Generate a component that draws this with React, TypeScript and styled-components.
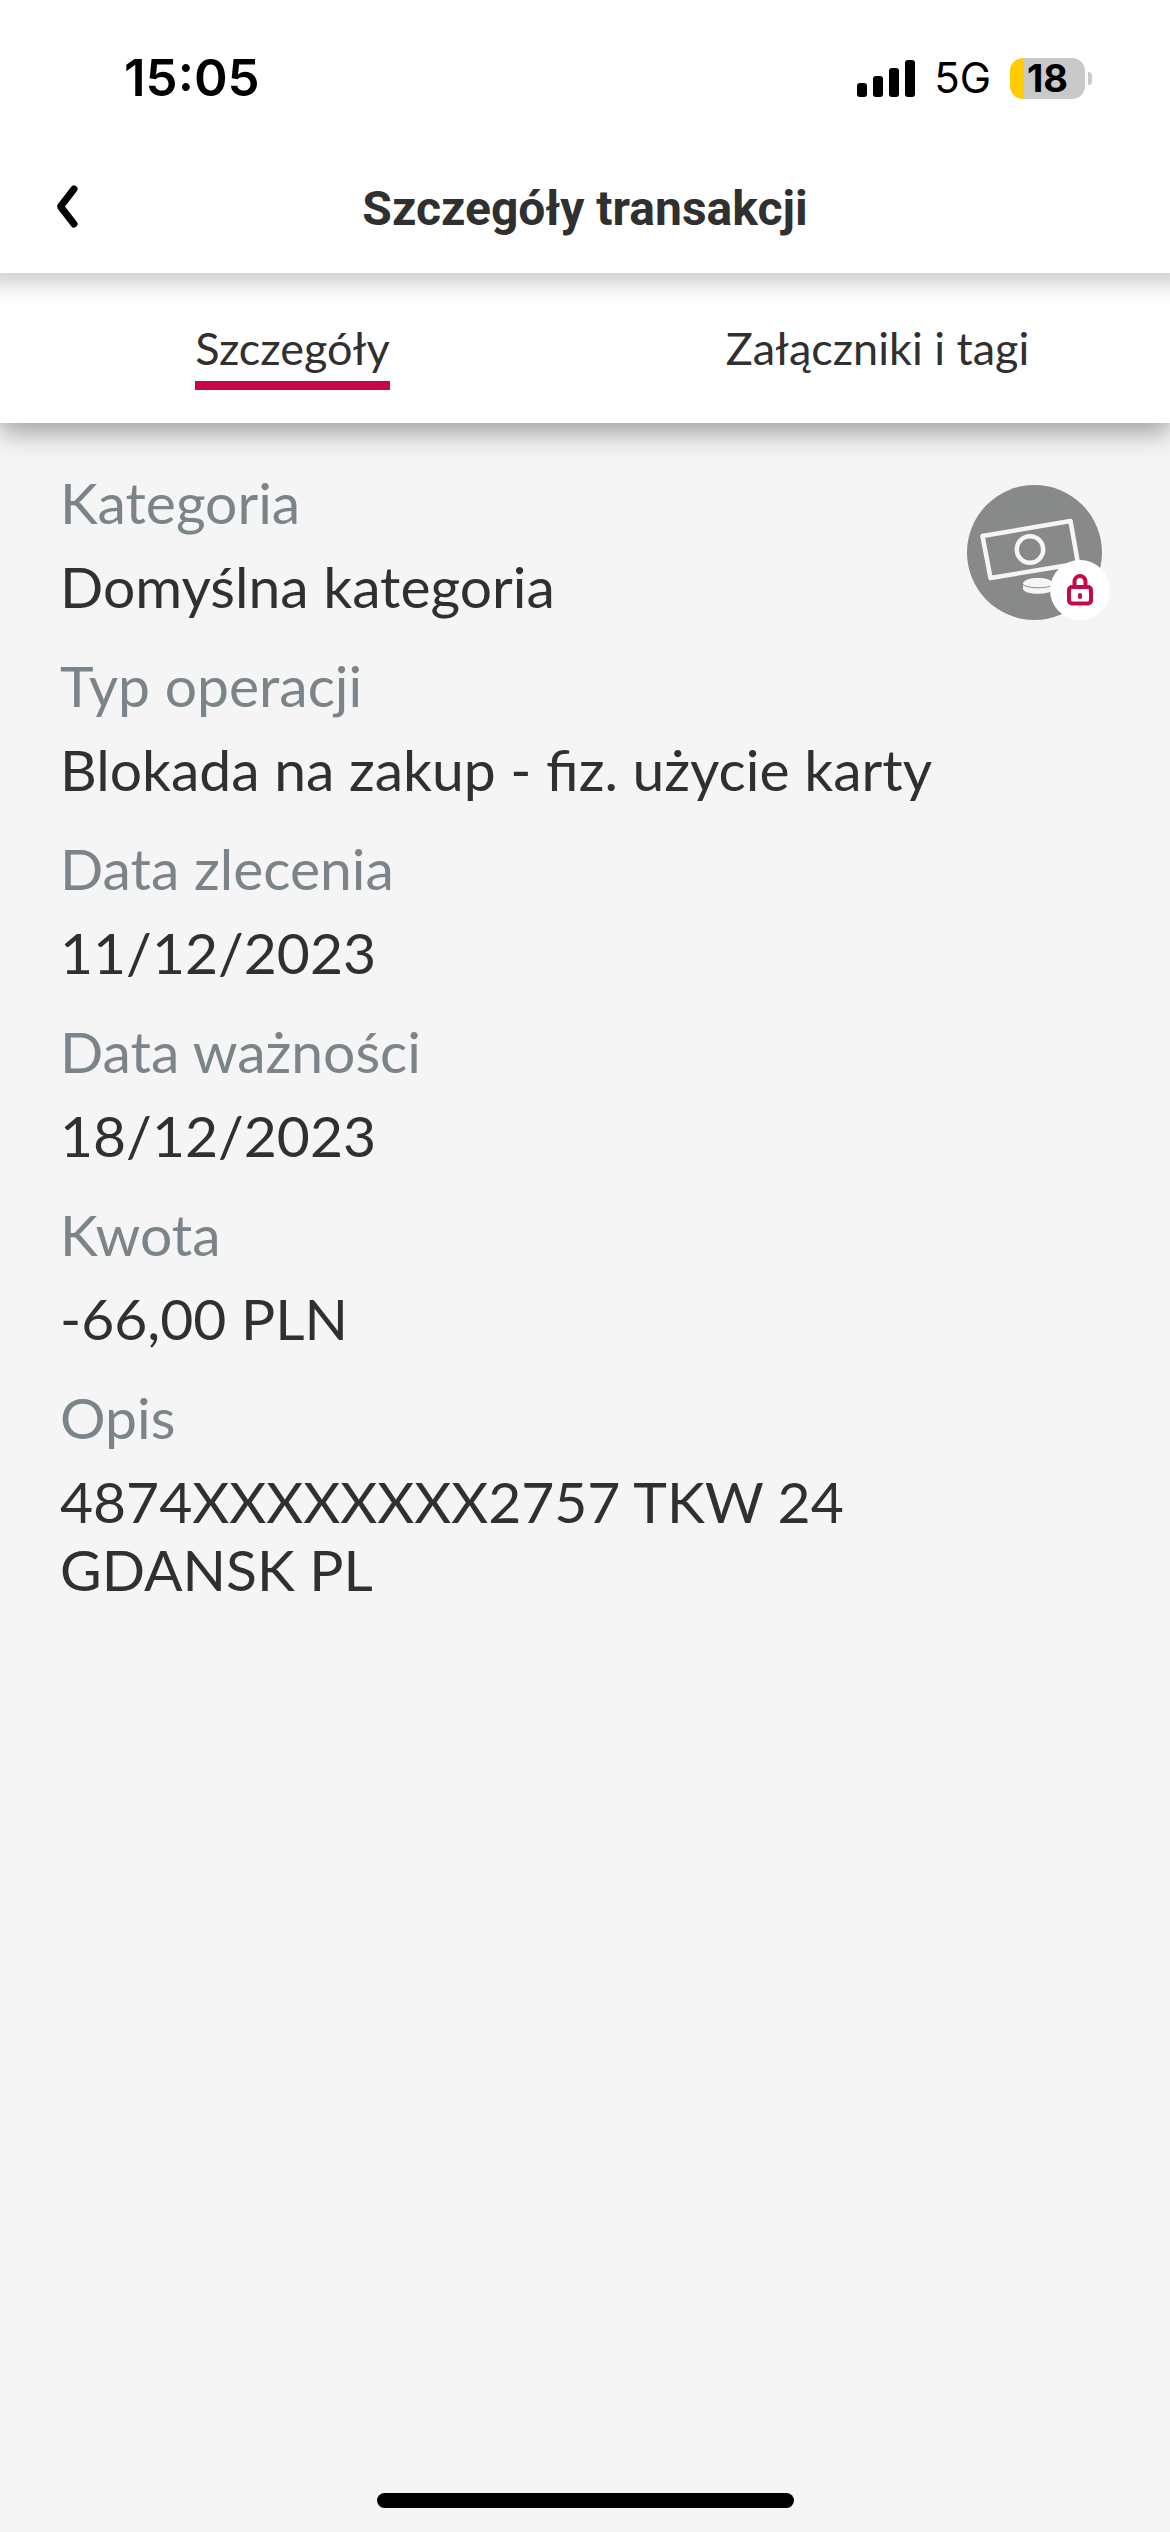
import React, { useState } from "react";
import styled, { createGlobalStyle } from "styled-components";

const GlobalStyle = createGlobalStyle`
  * { box-sizing: border-box; }
  body { margin: 0; background: #f5f5f5; }
`;

const Screen = styled.div`
  display: flex;
  flex-direction: column;
  min-height: 100vh;
  background: #f5f5f5;
  color: #303030;
  font-family: Lato, "Open Sans", sans-serif;
`;

const StatusBar = styled.div`
  display: flex;
  align-items: center;
  justify-content: space-between;
  height: 144px;
  padding: 12px 78px 0 124px;
  background: #fff;
  color: #000;
  font-family: Inter, "Liberation Sans", sans-serif;
`;

const Clock = styled.time`
  font-size: 51px;
  font-weight: 600;
  line-height: 60px;
`;

const StatusIcons = styled.div`
  display: flex;
  align-items: center;
  gap: 19px;
`;

const Network = styled.span`
  font-size: 42px;
  line-height: 60px;
`;

const Battery = styled.div`
  display: flex;
  align-items: center;
  gap: 3px;
`;

const BatteryCell = styled.div`
  display: flex;
  align-items: center;
  justify-content: center;
  width: 75px;
  height: 41px;
  border-radius: 13px;
  background: linear-gradient(to right, #ffcc00 14px, #c9c9c9 14px);
  font-size: 38px;
  font-weight: 700;
  line-height: 41px;
`;

const BatteryTip = styled.div`
  width: 4px;
  height: 13px;
  border-radius: 0 6px 6px 0;
  background: #c9c9c9;
`;

const Header = styled.header`
  position: relative;
  z-index: 2;
  display: grid;
  grid-template-columns: 136px 1fr 136px;
  align-items: center;
  height: 129px;
  background: #fff;
  box-shadow: 0 -6px 18px 18px rgba(0, 0, 0, 0.18);
  clip-path: inset(0 0 -40px 0);
`;

const BackButton = styled.button`
  display: flex;
  align-items: center;
  width: 136px;
  height: 96px;
  padding: 0 0 0 52px;
  border: 0;
  background: none;
  color: #000;
  cursor: pointer;
`;

const Title = styled.h1`
  margin: 0;
  font-family: Roboto, "Liberation Sans", sans-serif;
  font-size: 48px;
  font-weight: 700;
  line-height: 56px;
  text-align: center;
`;

const Tabs = styled.div`
  position: relative;
  z-index: 1;
  display: grid;
  grid-template-columns: 1fr 1fr;
  justify-items: center;
  align-items: start;
  padding: 48px 0 33px;
  background: #fff;
  box-shadow: 0 10px 24px rgba(0, 0, 0, 0.34);
  clip-path: inset(0 0 -48px 0);
`;

const Tab = styled.button<{ $active: boolean }>`
  padding: 0 0 6px;
  border: 0;
  border-bottom: 9px solid ${(p) => (p.$active ? "#c50847" : "transparent")};
  background: none;
  color: inherit;
  font-family: inherit;
  font-size: 45px;
  line-height: 54px;
  cursor: pointer;
`;

const Content = styled.main`
  display: flex;
  flex: 1;
  align-items: flex-start;
  justify-content: space-between;
  padding: 45px 60px;
`;

const Details = styled.dl`
  display: flex;
  flex: 1;
  flex-direction: column;
  gap: 31px;
  margin: 0;
`;

const Entry = styled.div`
  display: flex;
  flex-direction: column;
  gap: 16px;
  font-size: 57px;
  line-height: 68px;
`;

const Label = styled.dt`
  color: #7b8488;
`;

const Value = styled.dd`
  margin: 0;
`;

const CategoryIcon = styled.svg`
  flex: none;
  width: 143px;
  height: 135px;
  margin-top: 17px;
`;

const HomeArea = styled.footer`
  display: flex;
  justify-content: center;
  padding-bottom: 24px;
`;

const HomeIndicator = styled.div`
  width: 417px;
  height: 15px;
  border-radius: 8px;
  background: #000;
`;

const tabs = ["Szczegóły", "Załączniki i tagi"];

const entries = [
  { label: "Kategoria", value: "Domyślna kategoria" },
  { label: "Typ operacji", value: "Blokada na zakup - fiz. użycie karty" },
  { label: "Data zlecenia", value: "11/12/2023" },
  { label: "Data ważności", value: "18/12/2023" },
  { label: "Kwota", value: "-66,00 PLN" },
  { label: "Opis", value: "4874XXXXXXXX2757 TKW 24 GDANSK PL" },
];

export default function App() {
  const [active, setActive] = useState(0);
  return (
    <Screen>
      <GlobalStyle />
      <StatusBar>
        <Clock>15:05</Clock>
        <StatusIcons>
          <svg width="58" height="37" viewBox="0 0 58 37" aria-hidden="true">
            <rect x="0" y="23" width="10" height="14" rx="3" />
            <rect x="16" y="16" width="10" height="21" rx="3" />
            <rect x="32" y="8" width="10" height="29" rx="3" />
            <rect x="48" y="0" width="10" height="37" rx="3" />
          </svg>
          <Network>5G</Network>
          <Battery>
            <BatteryCell>18</BatteryCell>
            <BatteryTip />
          </Battery>
        </StatusIcons>
      </StatusBar>
      <Header>
        <BackButton type="button" aria-label="Wstecz">
          <svg width="30" height="52" viewBox="0 0 30 52" fill="none" aria-hidden="true">
            <path d="M22 6L8.500 23.500L22 41" stroke="currentColor" strokeWidth="7" strokeLinecap="round" strokeLinejoin="round" />
          </svg>
        </BackButton>
        <Title>Szczegóły transakcji</Title>
      </Header>
      <Tabs role="tablist">
        {tabs.map((name, i) => (
          <Tab
            key={name}
            type="button"
            role="tab"
            aria-selected={i === active}
            $active={i === active}
            onClick={() => setActive(i)}
          >
            {name}
          </Tab>
        ))}
      </Tabs>
      <Content>
        <Details>
          {entries.map((e) => (
            <Entry key={e.label}>
              <Label>{e.label}</Label>
              <Value>{e.value}</Value>
            </Entry>
          ))}
        </Details>
        <CategoryIcon viewBox="0 0 143 135" fill="none" aria-hidden="true">
          <circle cx="67.500" cy="67.500" r="67.500" fill="#888a89" />
          <g stroke="#f5f5f5" strokeWidth="4.500">
            <path d="M15.500 51L103.500 36L111 78.500L23.500 93Z" strokeLinejoin="round" />
            <circle cx="63" cy="64.500" r="13.200" />
          </g>
          <path d="M56 98.500C56 91 86 91 86 98.500V103.500C86 110.500 56 110.500 56 103.500Z" fill="#f5f5f5" />
          <path d="M56 99C58 104 84 104 86 99" stroke="#888a89" strokeWidth="1" />
          <circle cx="113" cy="105" r="30" fill="#fff" />
          <g stroke="#c50847" strokeWidth="4">
            <rect x="102" y="102" width="22" height="16.500" rx="3" />
            <path d="M107.500 101V96.500A5.500 5.500 0 0 1 118.500 96.500V101" />
          </g>
          <rect x="111" y="108" width="4" height="6" rx="2" fill="#c50847" />
        </CategoryIcon>
      </Content>
      <HomeArea>
        <HomeIndicator />
      </HomeArea>
    </Screen>
  );
}
